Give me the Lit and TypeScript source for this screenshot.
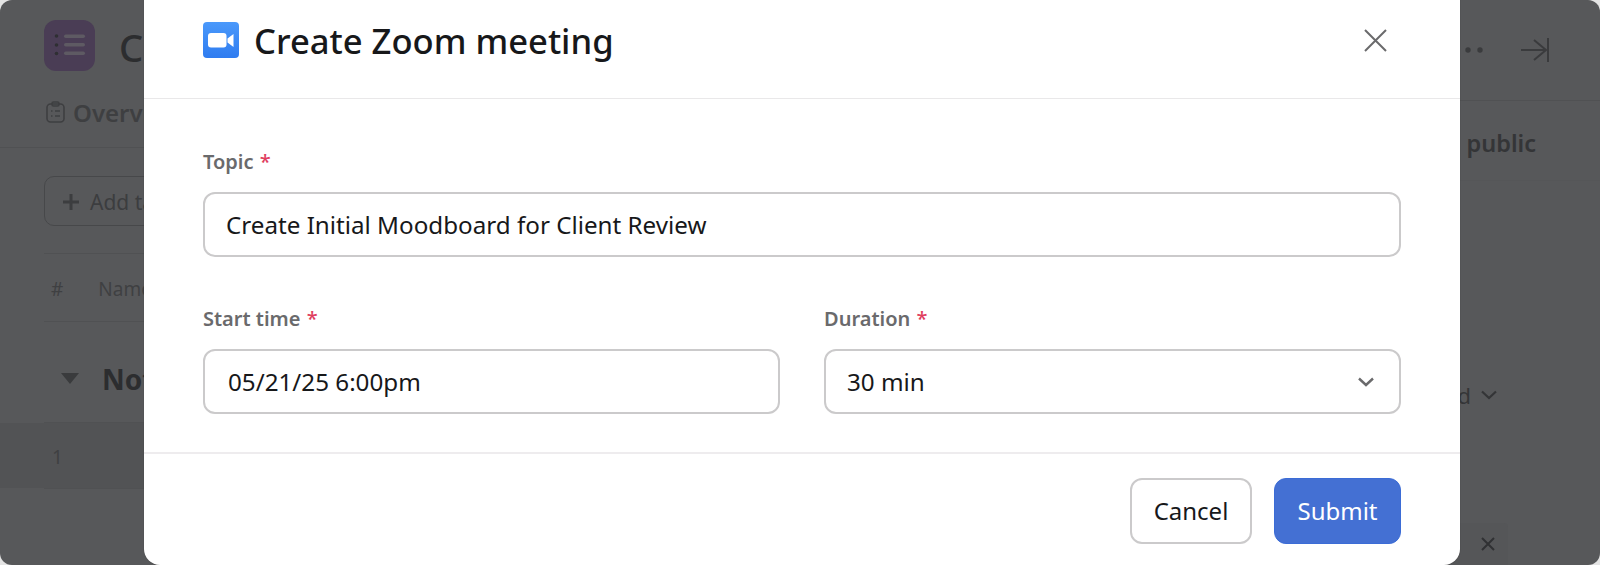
import { LitElement, html, css } from "lit";
import { customElement } from "lit/decorators.js";

@customElement("app-root")
export class AppRoot extends LitElement {
  static styles = css`
    :host { display: block; width: 1600px; height: 565px; overflow: hidden; position: relative; background: #e4e4e4; font-family: "Noto Sans", "Open Sans", sans-serif; }
    * { box-sizing: border-box; }
    svg { flex: none; }
    .page { width: 1600px; height: 565px; background: #57585a; border-radius: 12px; overflow: hidden; display: flex; justify-content: space-between; color: #2f3032; position: relative; }
    .main { flex: none; width: 144px; display: flex; flex-direction: column; white-space: nowrap; }
    .aside { flex: none; width: 140px; display: flex; flex-direction: column; white-space: nowrap; }
    .top { display: flex; align-items: flex-start; gap: 24px; padding: 20px 0 0 44px; }
    .app-icon { width: 51px; height: 51px; display: block; }
    .big { font-size: 38px; font-weight: 500; color: #2c2d2f; line-height: 51px; padding-top: 2px; }
    .tools { height: 101px; flex: none; display: flex; align-items: center; justify-content: flex-end; gap: 38px; padding: 0 51px 0 0; border-bottom: 1px solid #505153; }
    .dots { width: 30px; height: 6px; display: block; }
    .tabs { display: flex; align-items: center; margin-top: 25px; height: 28px; padding: 0 0 0 46px; }
    .tab { display: flex; align-items: center; gap: 8px; font-size: 24px; font-weight: 600; color: #3e3f41; }
    .sep { height: 22px; width: 400px; border-bottom: 1px solid #505153; flex: none; }
    .public { height: 80px; flex: none; display: flex; justify-content: flex-end; padding: 26px 64px 0 0; font-size: 23.5px; line-height: 32px; font-weight: 600; color: #343537; border-bottom: 1px solid #555658; }
    .public span, .sort span { flex: none; }
    .body { padding: 28px 0 0 44px; flex: 1; }
    .add { width: 200px; height: 50px; border: 1px solid #47484a; border-radius: 10px; display: flex; align-items: center; gap: 10px; padding: 1px 0 0 17px; font-size: 21px; color: #3c3d3f; }
    .head-row { margin-top: 27px; height: 69px; width: 400px; border-top: 1px solid #505153; border-bottom: 1px solid #505153; display: flex; align-items: center; gap: 35px; padding: 2px 0 0 7px; font-size: 19px; color: #3f4042; }
    .group { height: 101px; width: 400px; display: flex; align-items: center; gap: 23px; padding: 13px 0 0 17px; font-size: 28px; font-weight: 700; color: #2c2d2f; border-bottom: 1px solid #505153; }
    .row { height: 65px; width: 444px; margin-left: -44px; padding: 2px 0 0 52px; display: flex; align-items: center; background: #525355; font-size: 19px; color: #3f4042; }
    .row-end { height: 1px; width: 400px; background: #505153; }
    .sort { margin-top: 199px; height: 30px; flex: none; display: flex; justify-content: flex-end; padding-right: 103px; align-items: center; gap: 10px; font-size: 22px; color: #343537; }
    .chip { position: absolute; left: 1440px; bottom: 0; width: 68px; height: 42px; background: #555658; border-radius: 4px 4px 0 0; display: flex; align-items: center; justify-content: flex-end; padding-right: 13px; }

    .modal { position: absolute; left: 144px; top: -20px; width: 1316px; height: 585px; background: #fff; border-radius: 16px; display: flex; flex-direction: column; box-shadow: 0 0 1px #333; }
    .m-head { height: 119px; flex: none; display: flex; align-items: center; justify-content: space-between; padding: 2px 73px 0 59px; border-bottom: 1px solid #e9e8e9; }
    .m-title { display: flex; align-items: center; gap: 15px; font-size: 34.6px; font-weight: 500; color: #17181a; }
    .zoom { width: 36px; height: 36px; display: block; }
    .close { width: 23px; height: 23px; display: block; }
    .m-body { flex: none; height: 355px; padding: 50px 59px 0; display: flex; flex-direction: column; gap: 49px; border-bottom: 2px solid #eeecee; }
    .field { display: flex; flex-direction: column; gap: 17px; min-width: 0; }
    .two { display: grid; grid-template-columns: 577px 577px; gap: 44px; }
    label { font-size: 20px; line-height: 26px; font-weight: 600; color: #6a6a6c; display: block; }
    .req { color: #e0405f; font-weight: 500; margin-left: 1px; }
    .input { height: 65px; border: 2px solid #cbcacb; border-radius: 12px; display: flex; align-items: center; justify-content: space-between; padding: 0 24px 0 21px; font-size: 24.2px; color: #17181a; background: #fff; }
    .input.date { padding-left: 23px; }
    .chev { width: 18px; height: 12px; display: block; }
    .m-foot { flex: 1; display: flex; justify-content: flex-end; align-items: flex-start; gap: 22px; padding: 24px 59px 0; }
    .btn { height: 66px; border-radius: 12px; display: flex; align-items: center; justify-content: center; font-size: 24px; padding-bottom: 2px; }
    .cancel { width: 122px; border: 2px solid #cbcacb; color: #17181a; background: #fff; }
    .submit { width: 127px; background: #4470d3; color: #fff; border: 1px solid #3b6cd6; }
  `;

  render() {
    return html`
      <div class="page">
        <div class="main">
          <div class="top">
            <svg class="app-icon" viewBox="0 0 51 51">
              <rect width="51" height="51" rx="12" fill="#4a3d55"/>
              <g fill="#2f2f33"><circle cx="12.5" cy="16" r="1.8"/><circle cx="12.5" cy="25" r="1.8"/><circle cx="12.5" cy="33.5" r="1.8"/></g>
              <g fill="#5e5a63"><rect x="20" y="14.5" width="21" height="3.4" rx="1.7"/><rect x="20" y="23" width="21" height="3.4" rx="1.7"/><rect x="20" y="31.5" width="21" height="3.4" rx="1.7"/></g>
            </svg>
            <span class="big">Create</span>
          </div>
          <div class="tabs">
            <div class="tab">
              <svg width="19" height="22" viewBox="0 0 19 22" fill="none" stroke="#3e3f41" stroke-width="1.6"><rect x="1" y="3" width="17" height="18" rx="3.5"/><rect x="6" y="1" width="7" height="4" rx="1.5"/><path d="M5 10h1.5M9 10h5M5 15h1.5M9 15h5"/></svg>
              <span>Overview</span>
            </div>
          </div>
          <div class="sep"></div>
          <div class="body">
            <div class="add">
              <svg width="18" height="18" viewBox="0 0 18 18" stroke="#3c3d3f" stroke-width="3"><path d="M9 1V17M1 9H17"/></svg>
              <span>Add task</span>
            </div>
            <div class="head-row"><span>#</span><span>Name</span></div>
            <div class="group">
              <svg width="18" height="11" viewBox="0 0 18 11" fill="#3a3b3d"><path d="M0 0H18L9 11Z"/></svg>
              <span>Not</span>
            </div>
            <div class="row"><span>1</span></div>
            <div class="row-end"></div>
          </div>
        </div>
        <div class="aside">
          <div class="tools">
            <svg class="dots" viewBox="0 0 30 6" fill="#3a3b3d"><circle cx="3" cy="3" r="2.7"/><circle cx="15" cy="3" r="2.7"/><circle cx="27" cy="3" r="2.7"/></svg>
            <svg width="28" height="26" viewBox="0 0 28 26" fill="none" stroke="#3a3b3d" stroke-width="2"><path d="M0 13H25M13 3L25 13L13 23M27 1V25"/></svg>
          </div>
          <div class="public"><span>Make public</span></div>
          <div class="sort">
            <span>Sorted</span>
            <svg width="16" height="10" viewBox="0 0 16 10" fill="none" stroke="#343537" stroke-width="2.2"><path d="M1 1.5L8 8L15 1.5"/></svg>
          </div>
        </div>
        <div class="chip">
          <svg width="14" height="14" viewBox="0 0 14 14" stroke="#303133" stroke-width="2"><path d="M1 1L13 13M13 1L1 13"/></svg>
        </div>
      </div>

      <div class="modal">
        <div class="m-head">
          <div class="m-title">
            <svg class="zoom" viewBox="0 0 36 36">
              <defs><linearGradient id="zg" x1="0" y1="0" x2="0" y2="1"><stop offset="0" stop-color="#4a99fb"/><stop offset="1" stop-color="#2f7cf0"/></linearGradient></defs>
              <rect width="36" height="36" rx="4" fill="url(#zg)"/>
              <rect x="5" y="11" width="18.5" height="14.5" rx="3" fill="#fff"/>
              <path d="M24.5 16.5L30.5 12V25L24.5 20.5Z" fill="#fff"/>
            </svg>
            <span>Create Zoom meeting</span>
          </div>
          <svg class="close" viewBox="0 0 23 23" stroke="#6a6a6c" stroke-width="2"><path d="M1 1L22 22M22 1L1 22"/></svg>
        </div>
        <div class="m-body">
          <div class="field">
            <label>Topic <span class="req">*</span></label>
            <div class="input">Create Initial Moodboard for Client Review</div>
          </div>
          <div class="two">
            <div class="field">
              <label>Start time <span class="req">*</span></label>
              <div class="input date">05/21/25 6:00pm</div>
            </div>
            <div class="field">
              <label>Duration <span class="req">*</span></label>
              <div class="input">
                <span>30 min</span>
                <svg class="chev" viewBox="0 0 18 12" fill="none" stroke="#6a6a6c" stroke-width="2.4"><path d="M2 2.5L9 9L16 2.5"/></svg>
              </div>
            </div>
          </div>
        </div>
        <div class="m-foot">
          <div class="btn cancel">Cancel</div>
          <div class="btn submit">Submit</div>
        </div>
      </div>
    `;
  }
}
